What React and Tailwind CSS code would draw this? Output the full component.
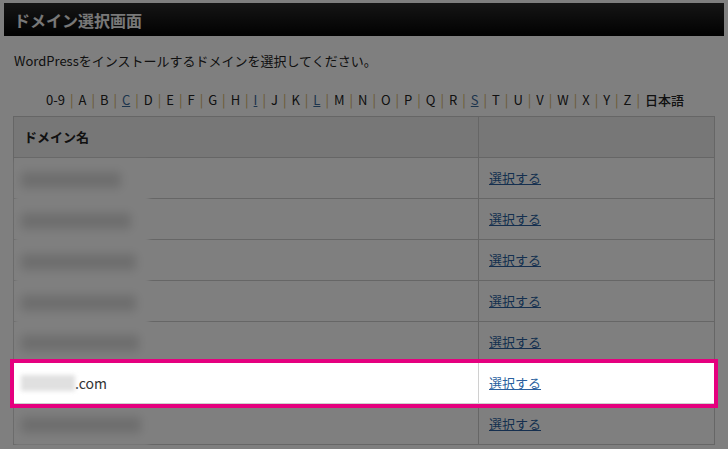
import React from "react";

const letters = ["0-9", "A", "B", "C", "D", "E", "F", "G", "H", "I", "J", "K", "L", "M", "N", "O", "P", "Q", "R", "S", "T", "U", "V", "W", "X", "Y", "Z", "日本語"];
const linked = ["C", "I", "L", "S"];

// widths of the blurred-out domain names
const rows = [
  { blur: 100 },
  { blur: 110 },
  { blur: 115 },
  { blur: 115 },
  { blur: 118 },
  { highlight: true },
  { blur: 120 },
];

const Row = ({ row }) => {
  if (row.highlight) {
    return (
      <div className="relative z-20 grid grid-cols-[465px_1fr] h-[41px] bg-white border-b border-[#d0d0d0] outline-4 outline-[#e5007f]">
        <div className="flex items-center pl-[7px] border-r border-[#d0d0d0] text-[14px] text-[#333]">
          <span className="w-[54px] h-[16px] bg-[#e0e0e0] blur-[2px]" />
          <span>.com</span>
        </div>
        <div className="flex items-center pl-[10px]">
          <a href="#" className="text-[13px] text-[#2a5f9e] underline">選択する</a>
        </div>
      </div>
    );
  }
  return (
    <div className="grid grid-cols-[465px_1fr] h-[41px] bg-white border-b border-[#cccccc]">
      <div className="border-r border-[#cccccc]" />
      <div className="flex items-center pl-[10px]">
        <a href="#" className="text-[13px] text-[#2a5f9e] underline">選択する</a>
      </div>
    </div>
  );
};

export default function App() {
  return (
    <div className="relative w-[728px] h-[449px] overflow-hidden bg-white text-[#222] font-['Noto_Sans_CJK_JP','Noto_Sans',sans-serif]">
      {/* title bar */}
      <div className="mx-[4px] mt-[3px] h-[33px] flex items-center pl-[10px] bg-linear-to-b from-[#2c2c2c] to-[#050505] text-[16px] font-bold text-[#f0f0f0]">
        ドメイン選択画面
      </div>

      <p className="mt-[15px] ml-[14px] text-[13px] leading-[20px]">
        WordPressをインストールするドメインを選択してください。
      </p>

      {/* index */}
      <div className="mt-[19px] flex justify-center pl-[2px] text-[13px] leading-[20px]">
        {letters.map((l, i) => (
          <span key={l} className="flex">
            {linked.includes(l) ? (
              <a href="#" className="text-[#3a6a9a] underline">{l}</a>
            ) : (
              <span className={l === "日本語" ? "font-medium" : ""}>{l}</span>
            )}
            {i < letters.length - 1 && <span className="mx-[5px] text-[#d4b060]">|</span>}
          </span>
        ))}
      </div>

      {/* table */}
      <div className="mx-[13px] mt-[6px] border-x border-t border-[#cccccc]">
        <div className="grid grid-cols-[465px_1fr] h-[41px] bg-[#eeeeee] border-b border-[#cccccc]">
          <div className="flex items-center pl-[10px] border-r border-[#cccccc] text-[13px] font-bold">ドメイン名</div>
          <div />
        </div>
        <div className="relative">
          {rows.map((r, i) => (
            <Row key={i} row={r} />
          ))}
          {/* blurred-out names */}
          <div className="absolute left-[1px] top-[2px] bottom-0 w-[134px] flex flex-col bg-white blur-[2px]">
            {rows.map((r, i) => (
              <div key={i} className="h-[41px] flex items-center pl-[6px]">
                {r.blur && <div className="h-[16px] bg-[#dcdcdc] blur-[4px]" style={{ width: r.blur }} />}
              </div>
            ))}
          </div>
        </div>
      </div>

      {/* dim overlay */}
      <div className="absolute inset-0 z-10 bg-black/50" />
    </div>
  );
}
